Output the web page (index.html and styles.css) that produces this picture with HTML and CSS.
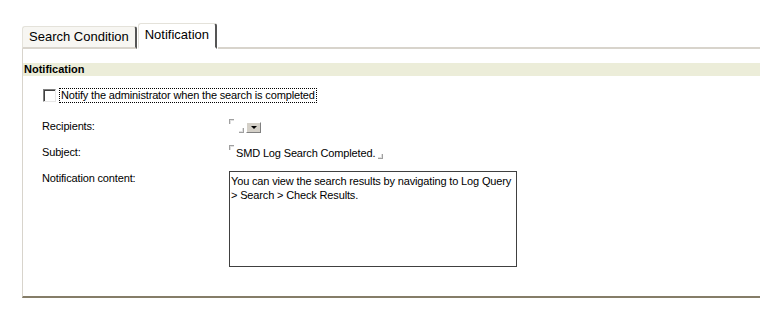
FILE: index.html
```html
<!DOCTYPE html>
<html lang="en">
<head>
    <meta charset="UTF-8">
    <title>Notification</title>
    <link rel="stylesheet" href="styles.css">
</head>
<body>

    <div class="tabs">
        <div class="tab">Search Condition</div>
        <div class="tab active">Notification</div>
        <div class="tab-fill"></div>
    </div>

    <div class="panel">
        <div class="section-title">Notification</div>

        <div class="check-row">
            <span class="checkbox"></span>
            <span class="check-label">Notify the administrator when the search is completed</span>
        </div>

        <div class="form-row">
            <div class="label">Recipients:</div>
            <div class="field">
                <span class="mark-tl"></span><span class="mark-br"></span><span class="drop-btn"><span class="arrow"></span></span>
            </div>
        </div>

        <div class="form-row">
            <div class="label">Subject:</div>
            <div class="field">
                <span class="mark-tl"></span><span class="field-text">SMD Log Search Completed.</span><span class="mark-br"></span>
            </div>
        </div>

        <div class="form-row">
            <div class="label">Notification content:</div>
            <div class="field">
                <div class="content-box">You can view the search results by navigating to Log Query &gt; Search &gt; Check Results.</div>
            </div>
        </div>
    </div>

</body>
</html>
```

FILE: styles.css
```css
body {
    margin: 0;
    background: #fff;
    font-family: 'Liberation Sans', Arial, sans-serif;
    font-size: 11px;
    letter-spacing: -0.15px;
    color: #000;
}

.tabs {
    display: flex;
    align-items: flex-end;
    padding: 25px 0 0 22px;
    height: 24px;
}

.tab {
    font-size: 13px;
    letter-spacing: 0;
    height: 20px;
    line-height: 20px;
    padding: 0 6px 0 6px;
    background: #f7f6f2;
    border-top: 1px solid #e4e2da;
    border-left: 1px solid #e4e2da;
    border-right: 2px solid #555;
    border-bottom: 2px solid #d8d4cc;
    border-radius: 3px 3px 0 0;
    margin-right: 1px;
}

.tab.active {
    height: 23px;
    line-height: 21px;
    background: #fff;
    border-bottom: 2px solid #fff;
}

.tab-fill {
    flex: 1;
    border-bottom: 2px solid #d8d4cc;
}

.panel {
    margin-left: 22px;
    height: 233px;
    border-left: 1px solid #d8d4cc;
    border-bottom: 2px solid #857d68;
    padding-top: 14px;
}

.section-title {
    background: #ecedd9;
    font-weight: bold;
    letter-spacing: 0;
    height: 13px;
    line-height: 13px;
    padding-left: 1px;
}

.check-row {
    display: flex;
    align-items: center;
    margin: 12px 0 0 20px;
    height: 14px;
}

.checkbox {
    width: 11px;
    height: 11px;
    background: #fff;
    border-top: 1px solid #808080;
    border-left: 1px solid #808080;
    border-right: 1px solid #e6e6e6;
    border-bottom: 1px solid #e6e6e6;
    box-shadow: inset 1px 1px 0 #404040;
}

.check-label {
    margin-left: 4px;
    padding: 0 1px;
    outline: 1px dotted #000;
    line-height: 13px;
}

.form-row {
    display: grid;
    grid-template-columns: 187px 1fr;
    margin: 12px 0 0 19px;
    min-height: 14px;
}

.check-row + .form-row {
    margin-top: 17px;
}

.label {
    line-height: 14px;
}

.field {
    display: flex;
    align-items: center;
    height: 14px;
}

.mark-tl {
    align-self: flex-start;
    width: 4px;
    height: 4px;
    border-top: 1px solid #a0a0a0;
    border-left: 1px solid #a0a0a0;
    box-shadow: inset 1px 1px 0 #e0e0e0;
    margin-right: 2px;
}

.mark-br {
    align-self: flex-end;
    width: 4px;
    height: 4px;
    border-bottom: 1px solid #a0a0a0;
    border-right: 1px solid #a0a0a0;
    box-shadow: inset -1px -1px 0 #e0e0e0;
    margin-left: 3px;
    margin-right: 2px;
}

.field-text {
    line-height: 14px;
    margin-top: 2px;
}

.drop-btn {
    display: flex;
    align-items: center;
    justify-content: center;
    width: 13px;
    height: 9px;
    background: #d4d0c8;
    border-top: 1px solid #fff;
    border-left: 1px solid #fff;
    border-right: 1px solid #808080;
    border-bottom: 1px solid #808080;
    margin-top: 2px;
}

.arrow {
    width: 0;
    height: 0;
    border-left: 3px solid transparent;
    border-right: 3px solid transparent;
    border-top: 3px solid #000;
}

.form-row:last-child .field {
    height: auto;
    align-items: flex-start;
}

.content-box {
    width: 283px;
    height: 92px;
    border: 1px solid #404040;
    padding: 2px 2px 0 1px;
    line-height: 14px;
}
```
